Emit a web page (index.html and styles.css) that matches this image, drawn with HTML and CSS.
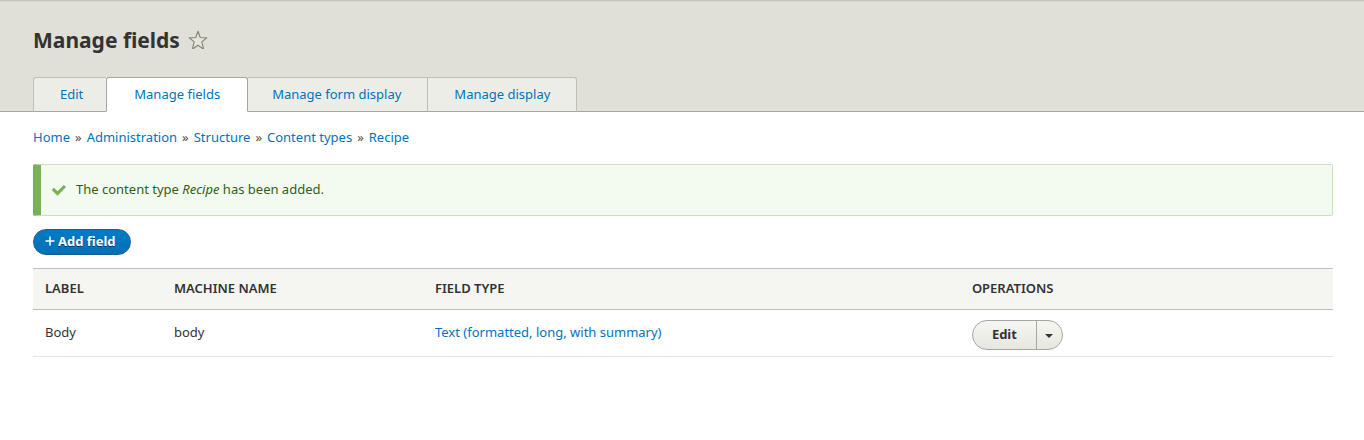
FILE: index.html
```html
<!DOCTYPE html>
<html lang="en">
<head>
<meta charset="utf-8">
<meta name="viewport" content="width=device-width, initial-scale=1">
<title>Manage fields</title>
<link rel="stylesheet" href="styles.css">
</head>
<body>
<header class="page-header">
  <div class="title-row">
    <h1 class="page-title">Manage fields</h1>
    <button class="shortcut" type="button" aria-label="Add to shortcuts">
      <svg width="20" height="20" viewBox="0 0 20 20" aria-hidden="true"><path d="M10 1.300l2.200 6.200 6.600.3-5 4.100 1.700 6.400h-1.200L10 15.300l-4.300 3H4.500l1.700-6.400-5-4.100 6.600-.3z" fill="#e5e5dd" stroke="#88887a" stroke-width="1.200" stroke-linejoin="round"/></svg>
    </button>
  </div>
  <nav class="tabs" aria-label="Tabs">
    <a class="tab" href="#">Edit</a>
    <a class="tab tab-active" href="#" aria-current="page">Manage fields</a>
    <a class="tab" href="#">Manage form display</a>
    <a class="tab" href="#">Manage display</a>
  </nav>
</header>
<main class="content">
  <nav class="breadcrumb" aria-label="Breadcrumb">
    <a href="#">Home</a><span>»</span><a href="#">Administration</a><span>»</span><a href="#">Structure</a><span>»</span><a href="#">Content types</a><span>»</span><a href="#">Recipe</a>
  </nav>
  <div class="message" role="status">
    <svg width="16" height="16" viewBox="0 0 16 16" aria-hidden="true"><path d="M6.500 13.700L.8 8l2.200-2.200 3.500 3.400 6.300-6.300 2.200 2.200z" fill="#73b355"/></svg>
    <p class="message-text">The content type <em>Recipe</em> has been added.</p>
  </div>
  <a class="add-button" href="#">
    <svg width="10" height="10" viewBox="0 0 10 10" aria-hidden="true"><path d="M5 .5v9M.5 5h9" stroke="#fff" stroke-width="1.500"/></svg>
    <span>Add field</span>
  </a>
  <table class="fields">
    <colgroup><col class="col-label"><col class="col-name"><col class="col-type"><col class="col-ops"></colgroup>
    <thead>
      <tr><th scope="col">Label</th><th scope="col">Machine name</th><th scope="col">Field type</th><th scope="col">Operations</th></tr>
    </thead>
    <tbody>
      <tr>
        <td>Body</td>
        <td>body</td>
        <td><a href="#">Text (formatted, long, with summary)</a></td>
        <td>
          <div class="dropbutton">
            <button class="drop-main" type="button">Edit</button>
            <button class="drop-toggle" type="button" aria-label="List additional actions"><svg width="8" height="4" viewBox="0 0 8 4" aria-hidden="true"><path d="M0 0h8L4 4z" fill="#333"/></svg></button>
          </div>
        </td>
      </tr>
    </tbody>
  </table>
</main>
</body>
</html>
```
FILE: styles.css
```css
* { box-sizing: border-box; }
body {
  margin: 0;
  background: #fff;
  color: #333;
  font: 13px/20px "Lucida Grande", "Lucida Sans Unicode", "Noto Sans", sans-serif;
}
a { color: #0074bd; text-decoration: none; }
button { font: inherit; color: inherit; cursor: pointer; }
.page-header {
  padding: 24px 33px 0;
  background: #e0e0d8;
  border-top: 1px solid #c4c3bc;
  border-bottom: 1px solid #a6a6a6;
  box-shadow: inset 0 1px #dadad2;
}
.title-row { display: flex; align-items: center; gap: 8px; }
.page-title { margin: 0; font-size: 21px; line-height: 30px; font-weight: 700; }
.shortcut { display: flex; padding: 0; border: 0; background: none; }
.tabs { display: flex; margin: 22px 0 -1px; }
.tab {
  height: 35px;
  padding: 6px 26px 8px;
  border: 1px solid #bfbfba;
  border-bottom-color: #a6a6a6;
  border-right-width: 0;
  background: #ecede7;
}
.tab:first-child { padding-right: 23px; border-top-left-radius: 3px; }
.tab:last-child { border-right-width: 1px; border-top-right-radius: 3px; }
.tab-active {
  padding-left: 27px;
  padding-right: 27px;
  border-color: #a6a6a6;
  border-right-width: 1px;
  border-bottom-color: #fff;
  border-radius: 3px 3px 0 0;
  background: #fff;
}
.tab-active + .tab { padding-left: 24px; border-left-width: 0; }
.content { padding: 16px 31px 0 33px; }
.breadcrumb { display: flex; flex-wrap: wrap; gap: 0 5px; line-height: 18px; color: #5b4a42; }
.message {
  display: flex;
  align-items: center;
  gap: 9px;
  margin: 18px 0 13px;
  padding: 14px 10px;
  border: 1px solid #c9e1bd;
  border-left: 8px solid #77b259;
  border-radius: 2px;
  background: #f3faef;
  color: #325e1c;
}
.message-text { margin: 0; padding-bottom: 2px; }
.add-button {
  display: inline-flex;
  align-items: center;
  gap: 3px;
  height: 26px;
  padding: 0 14px 2px 11px;
  border: 1px solid #1e5c90;
  border-radius: 13px;
  background: linear-gradient(#007bc6, #0071b8);
  color: #fff;
  font-weight: 700;
  text-shadow: 0 1px #003b66;
  vertical-align: top;
}
.fields { width: 100%; margin-top: 13px; border-collapse: collapse; table-layout: fixed; }
.col-label { width: 9.92%; }
.col-name { width: 20.08%; }
.col-type { width: 41.3%; }
.fields th {
  padding: 9px 12px 11px;
  border: solid #bfbfba;
  border-width: 1px 0;
  background: #f5f5f2;
  font-weight: 600;
  text-align: left;
  text-transform: uppercase;
}
.fields td { padding: 10px 12px 6px; border-bottom: 1px solid #e6e4df; vertical-align: top; line-height: 24px; }
.dropbutton {
  display: inline-flex;
  height: 30px;
  border: 1px solid #a6a6a6;
  border-radius: 15px;
  background: linear-gradient(#f6f6f3, #e7e7df);
  overflow: hidden;
  vertical-align: top;
}
.drop-main { padding: 0 19px 2px; border: 0; background: none; font-weight: 700; }
.drop-toggle {
  display: flex;
  align-items: center;
  justify-content: center;
  width: 26px;
  padding: 2px 0 0;
  border: 0;
  border-left: 1px solid #a6a6a6;
  background: none;
}
```
